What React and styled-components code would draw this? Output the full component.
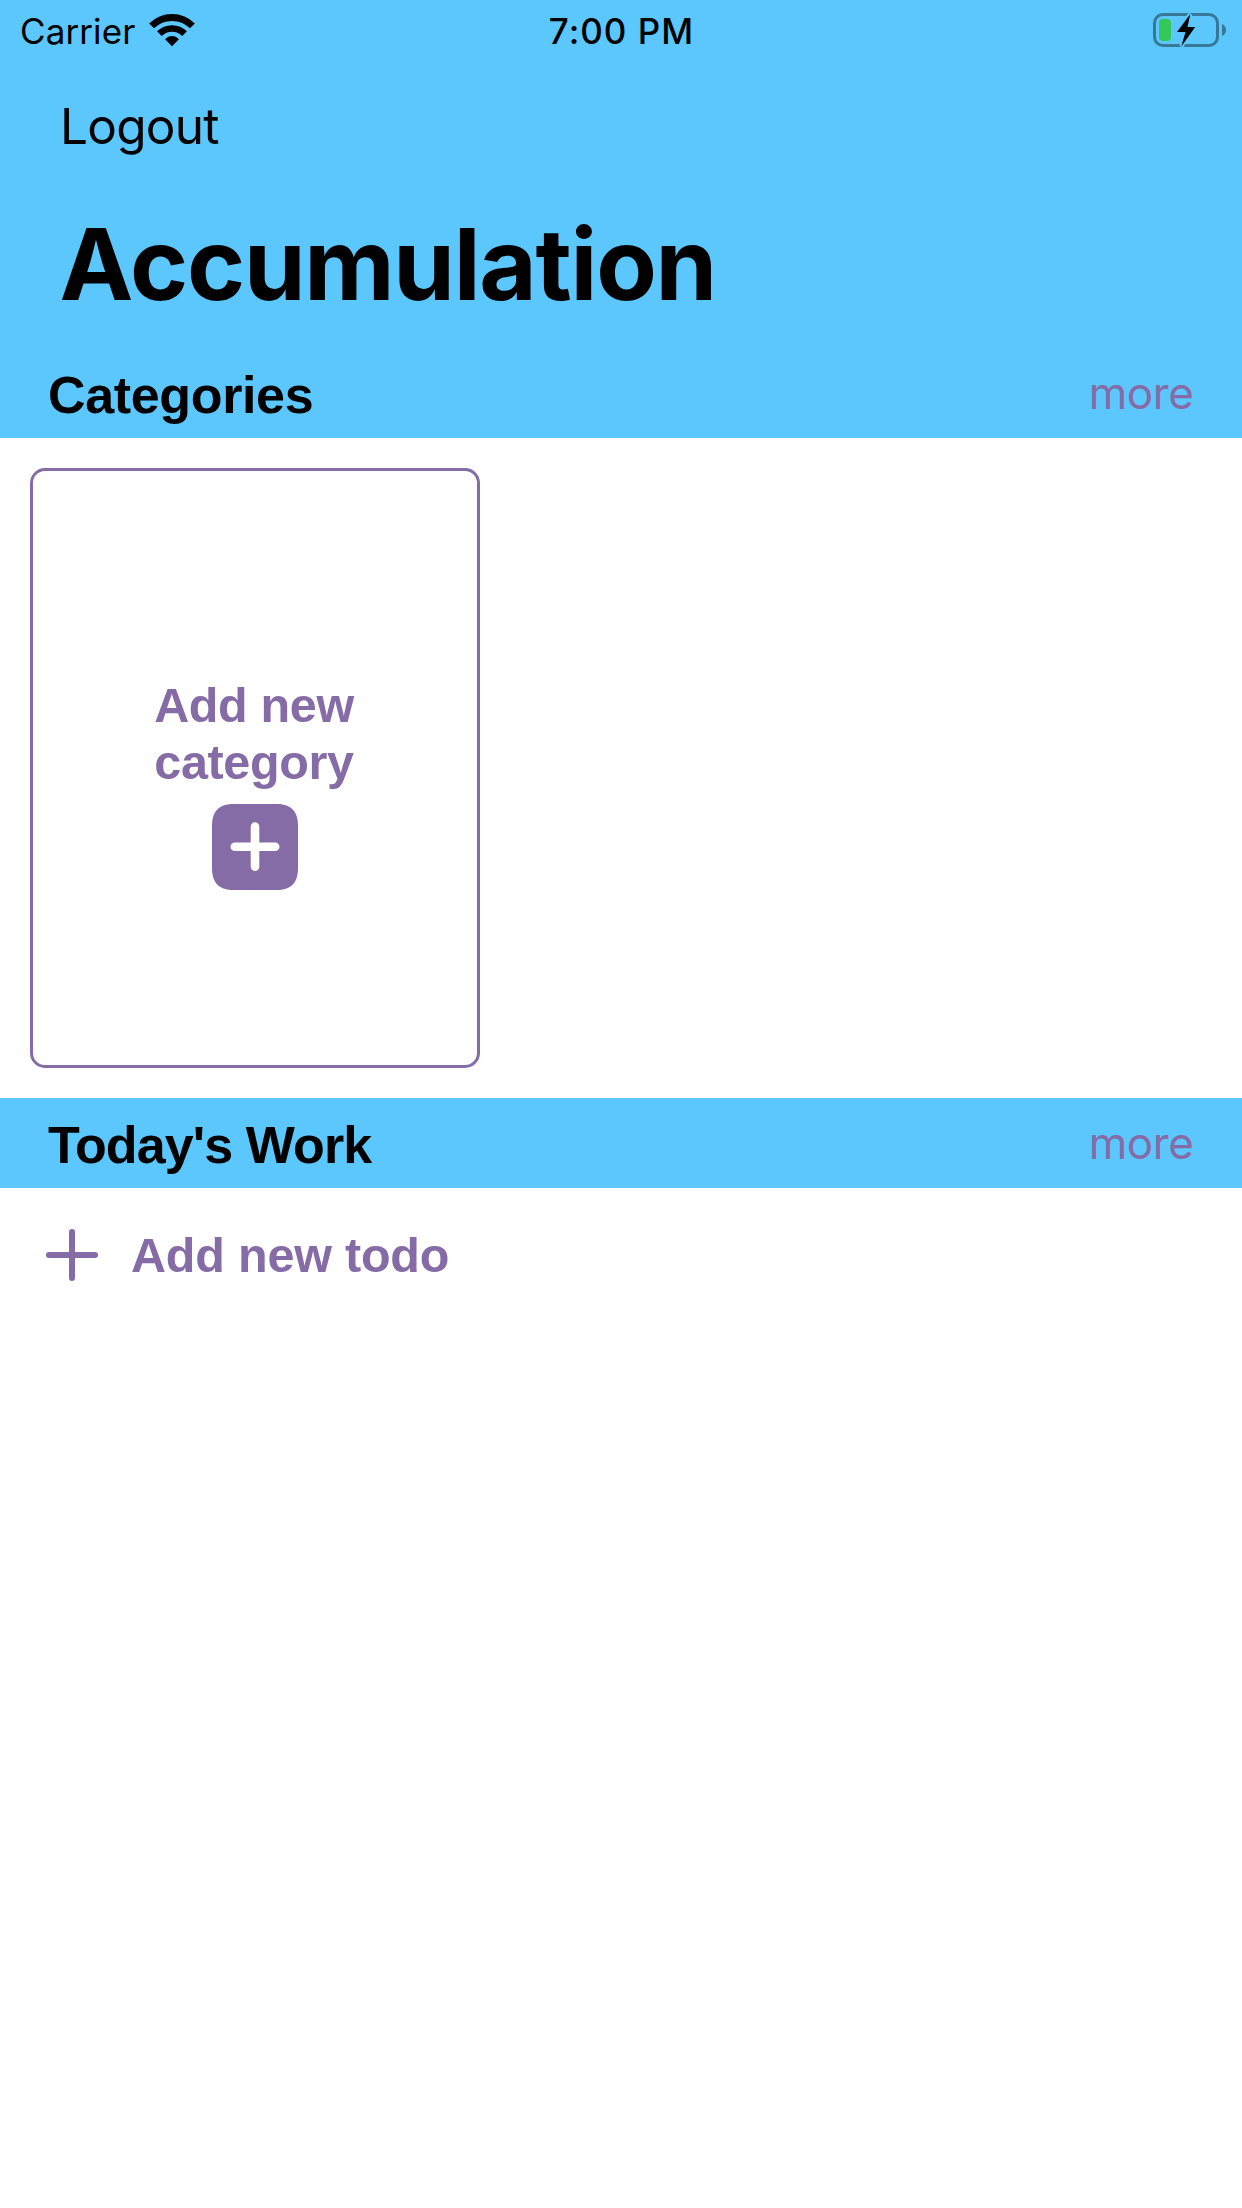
import React from 'react';
import styled, { createGlobalStyle } from 'styled-components';

const SKY = '#5bc7fc';
const PURPLE = '#866ca6';

const GlobalStyle = createGlobalStyle`
  *, *::before, *::after { box-sizing: border-box; }
  body { margin: 0; background: #fff; }
  button { border: 0; background: none; padding: 0; margin: 0; color: inherit; font: inherit; text-align: left; }
`;

const Screen = styled.main`
  display: flex;
  flex-direction: column;
  width: 1242px;
  height: 2208px;
  overflow: hidden;
  background: #fff;
  color: #000;
  font-family: Inter, 'Liberation Sans', sans-serif;
  svg { display: block; flex: none; }
`;

const Header = styled.header`
  background: ${SKY};
  padding-bottom: 12px;
`;

const StatusBar = styled.div`
  display: grid;
  grid-template-columns: 1fr auto 1fr;
  align-items: center;
  height: 60px;
  padding: 0 16px 0 20px;
`;

const Carrier = styled.div`
  display: flex;
  align-items: center;
  gap: 13.5px;
  padding-top: 2px;
  font-size: 35px;
  line-height: 40px;
  letter-spacing: 0.1px;
  svg { margin-top: -3px; }
`;

const Clock = styled.time`
  padding-top: 2px;
  font-size: 35px;
  font-weight: 550;
  line-height: 40px;
  letter-spacing: 1px;
  margin-right: 3px;
`;

const BatterySlot = styled.div`
  display: flex;
  justify-content: flex-end;
`;

const NavBar = styled.nav`
  display: flex;
  align-items: center;
  height: 132px;
  padding-left: 60px;
`;

const NavButton = styled.button`
  font-size: 49.5px;
  line-height: 60px;
  letter-spacing: -0.75px;
`;

const Title = styled.h1`
  margin: 0;
  padding-left: 59.5px;
  font-size: 99px;
  font-weight: 700;
  line-height: 144px;
  letter-spacing: -1.25px;
`;

const SectionHeader = styled.div`
  display: flex;
  align-items: center;
  justify-content: space-between;
  height: 90px;
  padding: 0 48.5px 0 48px;
  background: ${SKY};
`;

const SectionTitle = styled.h2`
  margin: 0;
  padding-top: 4px;
  font-family: 'Liberation Sans', Arial, sans-serif;
  font-size: 52px;
  font-weight: 700;
  line-height: 60px;
  letter-spacing: ${(p) => p.$tracking}px;
`;

const MoreButton = styled.button`
  color: ${PURPLE};
  font-size: 44px;
  line-height: 54px;
  letter-spacing: -0.4px;
`;

const CardStrip = styled.section`
  display: flex;
  padding: 30px;
`;

const CategoryCard = styled.button`
  display: flex;
  flex-direction: column;
  align-items: center;
  justify-content: center;
  gap: 13px;
  width: 450px;
  height: 600px;
  padding-top: 30px;
  border: 3px solid ${PURPLE};
  border-radius: 15px;
  color: ${PURPLE};
`;

const ActionLabel = styled.span`
  color: ${PURPLE};
  font-family: 'Liberation Sans', Arial, sans-serif;
  font-size: 48.5px;
  font-weight: 700;
  line-height: 57px;
  letter-spacing: ${(p) => p.$tracking}px;
`;

const CardLabel = styled(ActionLabel)`
  width: 260px;
  padding-right: 2px;
  text-align: center;
`;

const TodoRow = styled.button`
  display: flex;
  align-items: center;
  gap: 33px;
  height: 134px;
  padding-left: 46px;
`;

const WifiIcon = () => (
  <svg width="46" height="34" viewBox="0 0 46 34">
    <g fill="none" stroke="#000">
      <path d="M2.6 12.9A28.8 28.8 0 0 1 43.4 12.9" strokeWidth="7" />
      <path d="M10.4 20.7A17.8 17.8 0 0 1 35.6 20.7" strokeWidth="6.6" />
    </g>
    <path d="M23 33.2 16.1 26.3Q19 22.9 23 22.9T29.9 26.3Z" />
  </svg>
);

const BatteryIcon = () => (
  <svg width="74" height="36" viewBox="0 0 74 36">
    <rect x="2.5" y="2.5" width="63" height="31" rx="8.5" fill="none" stroke="#377797" strokeWidth="3" />
    <path d="M70 12Q74 13.8 74 18T70 24Z" fill="#377797" />
    <rect x="7" y="7" width="12" height="22" rx="4" fill="#34c759" />
    <path
      d="M38.3 2 25 19.9H33.5L29.3 34.4 43.2 15.1H35.5Z"
      fill={SKY}
      stroke={SKY}
      strokeWidth="4"
    />
    <path d="M38.3 2 25 19.9H33.5L29.3 34.4 43.2 15.1H35.5Z" />
  </svg>
);

const PlusSquareIcon = () => (
  <svg width="86" height="86" viewBox="0 0 86 86">
    <path
      fill={PURPLE}
      d="M22 0H64C79 0 86 7 86 22V64C86 79 79 86 64 86H22C7 86 0 79 0 64V22C0 7 7 0 22 0Z"
    />
    <path d="M43 22.5V62.7M22.8 42.8H63.2" stroke="#fff" strokeWidth="8.6" strokeLinecap="round" />
  </svg>
);

const PlusIcon = () => (
  <svg width="52" height="52" viewBox="0 0 52 52">
    <path d="M26 3V49M3 26H49" stroke={PURPLE} strokeWidth="6" strokeLinecap="round" />
  </svg>
);

const Section = ({ title, tracking }) => (
  <SectionHeader>
    <SectionTitle $tracking={tracking}>{title}</SectionTitle>
    <MoreButton>more</MoreButton>
  </SectionHeader>
);

export default function App() {
  return (
    <>
      <GlobalStyle />
      <Screen>
        <Header>
          <StatusBar>
            <Carrier>
              Carrier
              <WifiIcon />
            </Carrier>
            <Clock>7:00 PM</Clock>
            <BatterySlot>
              <BatteryIcon />
            </BatterySlot>
          </StatusBar>
          <NavBar>
            <NavButton>Logout</NavButton>
          </NavBar>
          <Title>Accumulation</Title>
        </Header>
        <Section title="Categories" tracking={-0.35} />
        <CardStrip>
          <CategoryCard>
            <CardLabel $tracking={-0.35}>Add new category</CardLabel>
            <PlusSquareIcon />
          </CategoryCard>
        </CardStrip>
        <Section title="Today's Work" tracking={-0.9} />
        <TodoRow>
          <PlusIcon />
          <ActionLabel $tracking={-0.2}>Add new todo</ActionLabel>
        </TodoRow>
      </Screen>
    </>
  );
}
